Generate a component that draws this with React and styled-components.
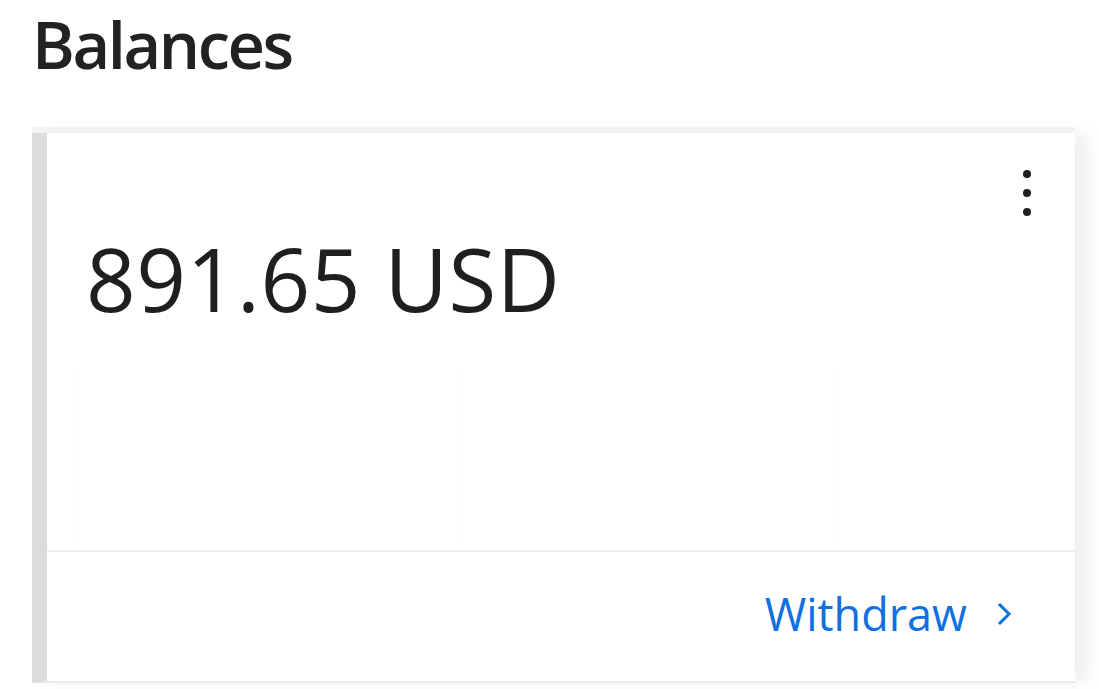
import React from 'react';
import styled, { createGlobalStyle } from 'styled-components';

const GlobalStyle = createGlobalStyle`
  body {
    margin: 0;
    background: #ffffff;
    font-family: "Open Sans", "Noto Sans", sans-serif;
  }
`;

function Balances() {
  const columns = [377, 375, 'auto'];
  return (
    <Page>
      <GlobalStyle />
      <Title>Balances</Title>
      <Card>
        <TopRow>
          <Kebab aria-label="More options">
            <Dot />
            <Dot />
            <Dot />
          </Kebab>
        </TopRow>
        <Amount>891.65 USD</Amount>
        <Stats>
          {columns.map((w, i) => (
            <StatCell key={i} $width={w} />
          ))}
        </Stats>
        <Divider />
        <Footer>
          <Link href="#">
            Withdraw
            <svg width="18" height="28" viewBox="0 0 18 28" fill="none">
              <polyline points="4,4 14,14 4,24" stroke="#1170e0" strokeWidth="3" />
            </svg>
          </Link>
        </Footer>
      </Card>
    </Page>
  );
}

const Page = styled.div`
  width: 1099px;
  height: 689px;
  overflow: hidden;
`;

const Title = styled.h1`
  margin: 0;
  padding: 4px 0 0 32px;
  height: 84px;
  box-sizing: border-box;
  font-size: 65px;
  line-height: 80px;
  font-weight: 600;
  color: #222222;
  letter-spacing: -2.4px;
`;

const Card = styled.section`
  margin: 49px 0 0 32px;
  width: 1043px;
  height: 550px;
  box-sizing: border-box;
  border-left: 15px solid #dcdcdc;
  border-bottom: 2px solid #ececec;
  background: #ffffff;
  box-shadow: 0 -6px 0 #f3f3f3, 14px 0 16px rgba(0, 0, 0, 0.06);
  display: flex;
  flex-direction: column;
`;

const TopRow = styled.div`
  height: 95px;
  box-sizing: border-box;
  padding: 37px 44px 0 0;
  display: flex;
  justify-content: flex-end;
  align-items: flex-start;
`;

const Kebab = styled.button`
  border: 0;
  background: none;
  padding: 0;
  display: flex;
  flex-direction: column;
  gap: 11px;
  cursor: pointer;
`;

const Dot = styled.span`
  width: 8px;
  height: 8px;
  border-radius: 50%;
  background: #1f1f1f;
`;

const Amount = styled.div`
  padding-left: 39px;
  font-size: 87px;
  line-height: 100px;
  font-weight: 400;
  color: #1f1f1f;
  letter-spacing: 0.6px;
`;

const Stats = styled.div`
  margin: 37px 0 0 31px;
  height: 185px;
  display: flex;
`;

const StatCell = styled.div`
  width: ${(p) => (typeof p.$width === 'number' ? `${p.$width}px` : p.$width)};
  flex: ${(p) => (p.$width === 'auto' ? '1' : 'none')};
  border-left: 1px solid #fcfcf2;
`;

const Divider = styled.div`
  height: 2px;
  background: #f0f0f4;
`;

const Footer = styled.div`
  flex: 1;
  display: flex;
  justify-content: flex-end;
  align-items: center;
  padding: 0 62px 6px 0;
`;

const Link = styled.a`
  display: flex;
  align-items: center;
  gap: 28px;
  font-size: 45px;
  line-height: 60px;
  color: #1170e0;
  text-decoration: none;
  letter-spacing: 0;
`;

export default Balances;
